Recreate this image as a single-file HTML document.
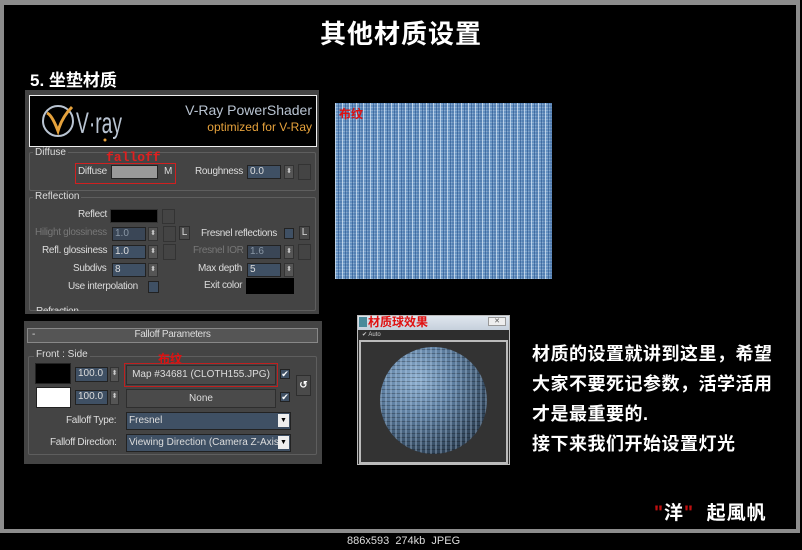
<!DOCTYPE html>
<html><head><meta charset="utf-8"><style>
*{margin:0;padding:0;box-sizing:border-box}
body{width:802px;height:550px;background:#000;position:relative;overflow:hidden;font-family:"Liberation Sans","Noto Sans CJK SC",sans-serif}
.a{position:absolute}
.cn{font-family:"Liberation Sans","Noto Sans CJK SC",sans-serif;font-weight:bold;color:#fff}
.ui{font-size:10px;color:#ddd;letter-spacing:-0.3px}
.dim{color:#777}
.fld{background:#3f5064;border:1px solid #222;color:#ddd;font-size:10px;padding-left:2px;line-height:12px}
.fld.d{color:#8a97a5;background:#3a4656}
.sp{background:#555;border:1px solid #333;color:#ccc;font-size:7px;text-align:center;line-height:12px}
.bx{background:#444;border:1px solid #333}
.grp{border:1px solid #5e5e5e;border-radius:2px}
.lbl{background:#444;padding:0 2px;font-size:10px;color:#ddd}
.btn{background:#4a4a4a;border:1px solid #2e2e2e;color:#ddd;font-size:10px;text-align:center}
.chk{background:#3f5064;border:1px solid #222;color:#fff;font-size:9px;line-height:9px;text-align:center}
</style></head><body>
<div class="a" style="left:0;top:0;width:800px;height:533px;border:4px solid #8c8c8c;border-top-width:5px"></div>
<div class="a" style="left:347px;top:535px;color:#ddd;font-size:11px">886x593&nbsp; 274kb&nbsp; JPEG</div>

<div class="a cn" style="left:0;width:802px;top:14px;text-align:center;font-size:26px;letter-spacing:1px">其他材质设置</div>
<div class="a cn" style="left:30px;top:66px;font-size:17px">5. 坐垫材质</div>

<div class="a" style="left:25px;top:90px;width:294px;height:224px;background:#444"></div>
<div class="a" style="left:29px;top:95px;width:288px;height:52px;background:#000;border:1px solid #eee"></div>
<svg class="a" style="left:38px;top:101px" width="90" height="42" viewBox="0 0 90 42">
<ellipse cx="20" cy="20" rx="15" ry="15" fill="none" stroke="#b9c4d2" stroke-width="2"/>
<path d="M9 12 Q14 14 20 30 Q24 16 34 6" fill="none" stroke="#e6a23c" stroke-width="3"/>
<text x="38" y="32" font-family="Liberation Sans Narrow,Liberation Sans,sans-serif" font-size="30" fill="#b9c4d2" textLength="46" lengthAdjust="spacingAndGlyphs">V·ray</text>
<circle cx="67" cy="39" r="1.5" fill="#e6a23c"/>
</svg>
<div class="a" style="left:170px;top:102px;width:142px;text-align:right;color:#b9c4d2;font-size:14px">V-Ray PowerShader</div>
<div class="a" style="left:170px;top:120px;width:142px;text-align:right;color:#e6a23c;font-size:12px">optimized for V-Ray</div>

<div class="a grp" style="left:29px;top:152px;width:287px;height:39px"></div>
<div class="a lbl" style="left:33px;top:147px">Diffuse</div>
<div class="a" style="left:106px;top:150px;color:#e02020;font-weight:bold;font-size:13px;font-family:'Liberation Mono',monospace">falloff</div>
<div class="a" style="left:75px;top:163px;width:101px;height:21px;border:1px solid #d02020"></div>
<div class="a ui" style="left:78px;top:166px">Diffuse</div>
<div class="a" style="left:111px;top:165px;width:47px;height:14px;background:#999;border:1px solid #222"></div>
<div class="a ui" style="left:164px;top:166px">M</div>
<div class="a ui" style="left:195px;top:166px">Roughness</div>
<div class="a fld" style="left:247px;top:165px;width:34px;height:14px">0.0</div>
<div class="a sp" style="left:284px;top:165px;width:10px;height:14px">⬍</div>
<div class="a bx" style="left:298px;top:164px;width:13px;height:16px"></div>

<div class="a grp" style="left:29px;top:197px;width:287px;height:114px"></div>
<div class="a lbl" style="left:33px;top:191px">Reflection</div>
<div class="a ui" style="left:78px;top:209px">Reflect</div>
<div class="a" style="left:110px;top:209px;width:48px;height:14px;background:#000;border:1px solid #333"></div>
<div class="a bx" style="left:162px;top:209px;width:13px;height:15px"></div>

<div class="a ui dim" style="left:35px;top:227px">Hilight glossiness</div>
<div class="a fld d" style="left:112px;top:227px;width:34px;height:14px">1.0</div>
<div class="a sp" style="left:148px;top:227px;width:10px;height:14px">⬍</div>
<div class="a bx" style="left:163px;top:226px;width:13px;height:16px"></div>
<div class="a btn" style="left:179px;top:226px;width:11px;height:14px;line-height:12px">L</div>
<div class="a ui" style="left:201px;top:228px">Fresnel reflections</div>
<div class="a chk" style="left:284px;top:228px;width:10px;height:11px"></div>
<div class="a btn dim" style="left:299px;top:226px;width:11px;height:14px;line-height:12px">L</div>

<div class="a ui" style="left:42px;top:245px">Refl. glossiness</div>
<div class="a fld" style="left:112px;top:245px;width:34px;height:14px">1.0</div>
<div class="a sp" style="left:148px;top:245px;width:10px;height:14px">⬍</div>
<div class="a bx" style="left:163px;top:244px;width:13px;height:16px"></div>
<div class="a ui dim" style="left:193px;top:245px">Fresnel IOR</div>
<div class="a fld d" style="left:247px;top:245px;width:34px;height:14px">1.6</div>
<div class="a sp" style="left:284px;top:245px;width:10px;height:14px">⬍</div>
<div class="a bx" style="left:298px;top:244px;width:13px;height:16px"></div>

<div class="a ui" style="left:73px;top:263px">Subdivs</div>
<div class="a fld" style="left:112px;top:263px;width:34px;height:14px">8</div>
<div class="a sp" style="left:148px;top:263px;width:10px;height:14px">⬍</div>
<div class="a ui" style="left:198px;top:263px">Max depth</div>
<div class="a fld" style="left:247px;top:263px;width:34px;height:14px">5</div>
<div class="a sp" style="left:284px;top:263px;width:10px;height:14px">⬍</div>

<div class="a ui" style="left:68px;top:281px">Use interpolation</div>
<div class="a chk" style="left:148px;top:281px;width:11px;height:12px"></div>
<div class="a ui" style="left:204px;top:280px">Exit color</div>
<div class="a" style="left:246px;top:278px;width:48px;height:16px;background:#000"></div>
<div class="a ui" style="left:36px;top:306px;height:5px;overflow:hidden">Refraction</div>

<div class="a" style="left:335px;top:103px;width:217px;height:176px;background:
repeating-linear-gradient(90deg,rgba(235,245,255,.6) 0 1px,transparent 1px 3px,rgba(20,60,120,.45) 3px 4px,transparent 4px 5px,rgba(30,70,130,.25) 5px 7px),
repeating-linear-gradient(0deg,rgba(255,255,255,.22) 0 1px,transparent 1px 3px),#6592c2"></div>
<div class="a" style="left:339px;top:105px;color:#e01010;font-weight:bold;font-size:12px">布纹</div>

<div class="a" style="left:24px;top:321px;width:298px;height:143px;background:#444"></div>
<div class="a" style="left:27px;top:328px;width:291px;height:15px;background:#555;border:1px solid #888"></div>
<div class="a ui" style="left:32px;top:329px">-</div>
<div class="a ui" style="left:27px;top:329px;width:291px;text-align:center">Falloff Parameters</div>
<div class="a grp" style="left:28px;top:356px;width:289px;height:99px"></div>
<div class="a lbl" style="left:34px;top:349px">Front : Side</div>
<div class="a" style="left:35px;top:363px;width:36px;height:21px;background:#000;border:1px solid #222"></div>
<div class="a" style="left:36px;top:387px;width:35px;height:21px;background:#fff;border:1px solid #222"></div>
<div class="a fld" style="left:75px;top:367px;width:33px;height:15px">100.0</div>
<div class="a sp" style="left:110px;top:367px;width:9px;height:15px">⬍</div>
<div class="a fld" style="left:75px;top:390px;width:33px;height:15px">100.0</div>
<div class="a sp" style="left:110px;top:390px;width:9px;height:15px">⬍</div>
<div class="a" style="left:158px;top:350px;color:#e01010;font-weight:bold;font-size:12px">布纹</div>
<div class="a" style="left:124px;top:363px;width:154px;height:24px;border:1px solid #c02020"></div>
<div class="a btn" style="left:126px;top:365px;width:150px;height:20px;line-height:18px">Map #34681 (CLOTH155.JPG)</div>
<div class="a btn" style="left:126px;top:389px;width:150px;height:19px;line-height:17px">None</div>
<div class="a chk" style="left:280px;top:369px;width:10px;height:10px">✔</div>
<div class="a chk" style="left:280px;top:392px;width:10px;height:10px">✔</div>
<div class="a btn" style="left:296px;top:375px;width:15px;height:21px;line-height:19px;font-weight:bold;color:#fff">↺</div>
<div class="a ui" style="left:66px;top:415px">Falloff Type:</div>
<div class="a fld" style="left:126px;top:412px;width:165px;height:18px;line-height:16px">Fresnel</div>
<div class="a" style="left:278px;top:414px;width:11px;height:13px;background:#eee;color:#000;font-size:7px;text-align:center;line-height:13px">▼</div>
<div class="a ui" style="left:50px;top:437px">Falloff Direction:</div>
<div class="a fld" style="left:126px;top:434px;width:165px;height:18px;line-height:16px">Viewing Direction (Camera Z-Axis)</div>
<div class="a" style="left:278px;top:436px;width:11px;height:13px;background:#eee;color:#000;font-size:7px;text-align:center;line-height:13px">▼</div>

<div class="a" style="left:357px;top:315px;width:153px;height:150px;background:#2e2e2e;border:1px solid #bbb"></div>
<div class="a" style="left:358px;top:316px;width:151px;height:14px;background:linear-gradient(#dfe6ee,#c6d0dc)"></div>
<div class="a" style="left:488px;top:317px;width:18px;height:9px;border:1px solid #999;background:#eee;font-size:7px;text-align:center;line-height:8px;color:#555">✕</div>
<div class="a" style="left:359px;top:317px;width:8px;height:10px;background:#4a8a9a"></div>
<div class="a" style="left:368px;top:313px;color:#e01010;font-weight:bold;font-size:12px">材质球效果</div>
<div class="a" style="left:362px;top:331px;color:#ccc;font-size:6px">✔ Auto</div>
<div class="a" style="left:359px;top:340px;width:149px;height:124px;background:#333;border:2px solid #bbb"></div>
<div class="a" style="left:380px;top:347px;width:107px;height:107px;border-radius:50%;background:
repeating-linear-gradient(90deg,rgba(190,215,240,.3) 0 2px,transparent 2px 5px),
repeating-linear-gradient(0deg,rgba(0,0,0,.25) 0 1px,transparent 1px 4px),
radial-gradient(circle at 35% 30%,#8fb0d0 0%,#5f80a2 35%,#34495f 70%,#1a2430 100%)"></div>

<div class="a cn" style="left:532px;top:339px;font-size:18px;line-height:30px;letter-spacing:0.5px">材质的设置就讲到这里，希望<br>大家不要死记参数，活学活用<br>才是最重要的.<br>接下来我们开始设置灯光</div>
<div class="a cn" style="left:654px;top:498px;font-size:19px;letter-spacing:1px"><span style="color:#c01010">"</span>洋<span style="color:#c01010">"</span> &nbsp;起風帆</div>
</body></html>
